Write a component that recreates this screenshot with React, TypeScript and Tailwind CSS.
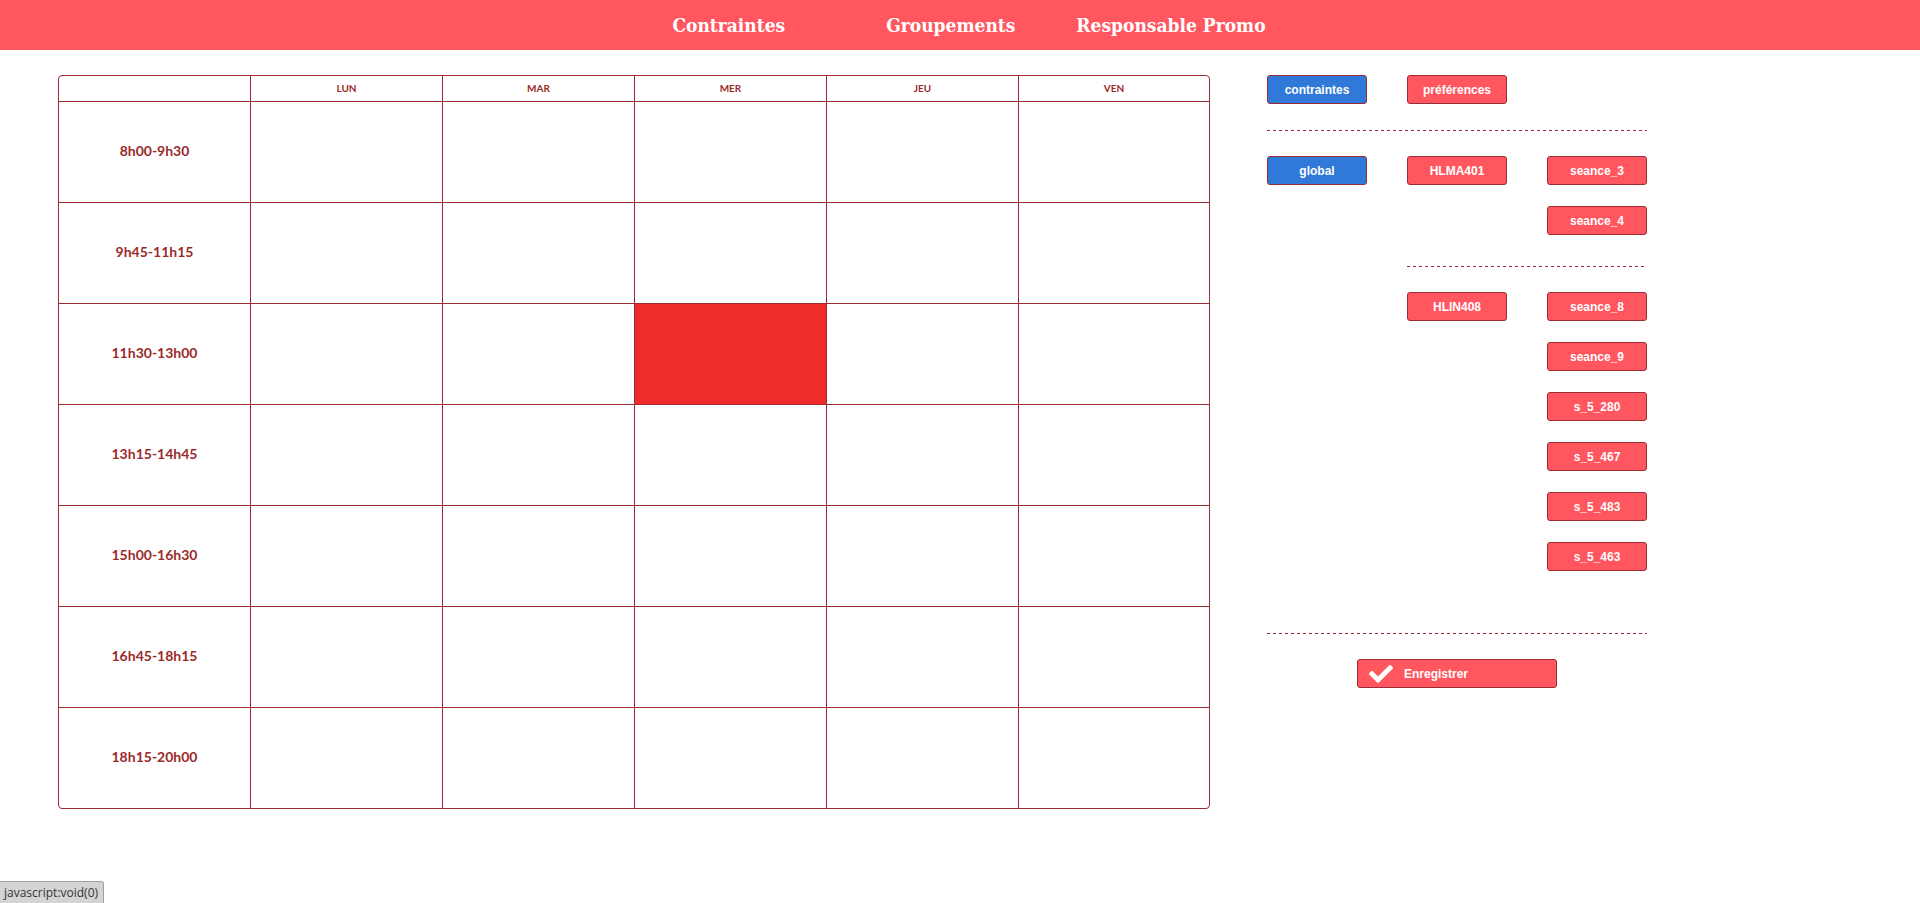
const days = ["LUN", "MAR", "MER", "JEU", "VEN"];
const slots = [
  "8h00-9h30",
  "9h45-11h15",
  "11h30-13h00",
  "13h15-14h45",
  "15h00-16h30",
  "16h45-18h15",
  "18h15-20h00",
];

// cells that are marked as blocked (slot index, day index)
const blocked = new Set(["2-2"]);

const Btn = ({ label, blue }: { label: string; blue?: boolean }) => (
  <button
    className={
      "w-[100px] h-[29px] rounded-[3px] border border-[#9b2c33] text-white text-[12px] font-bold leading-none " +
      (blue ? "bg-[#3079d8]" : "bg-[#ff5660]")
    }
    style={{ fontFamily: '"Liberation Sans", Arial, sans-serif' }}
  >
    {label}
  </button>
);

const Empty = () => <div className="w-[100px] h-[29px]" />;

const Dashed = ({ className = "" }: { className?: string }) => (
  <div
    className={
      "h-px bg-[repeating-linear-gradient(to_right,#9b2c33_0_3px,transparent_3px_6px)] " + className
    }
  />
);

export default function App() {
  return (
    <div className="min-h-screen bg-white">
      <nav
        className="h-[50px] bg-[#ff5660] flex items-center justify-center text-white font-bold text-[19px] pl-[18px]"
        style={{ fontFamily: '"DejaVu Serif", serif', fontStretch: "condensed" }}
      >
        <a href="#">Contraintes</a>
        <a href="#" className="ml-[101px]">Groupements</a>
        <a href="#" className="ml-[61px]">Responsable Promo</a>
      </nav>

      <div className="flex items-start pt-[25px] pl-[58px] gap-[57px]">
        {/* emploi du temps */}
        <div
          className="w-[1152px] border border-[#9b2c33] rounded-[4px] overflow-hidden text-[#9b2a2a]"
          style={{ fontFamily: "Lato, sans-serif" }}
        >
          <div className="grid grid-cols-[192px_192px_192px_192px_192px_1fr]">
            <div className="h-[26px] border-r border-b border-[#9b2c33]" />
            {days.map((d, i) => (
              <div
                key={d}
                className={
                  "h-[26px] border-b border-[#9b2c33] flex items-center justify-center text-[10px] font-bold " +
                  (i < 4 ? "border-r" : "")
                }
              >
                {d}
              </div>
            ))}
            {slots.map((s, r) => {
              const last = r === slots.length - 1;
              return [
                <div
                  key={s}
                  className={
                    "border-r border-[#9b2c33] flex items-center justify-center text-[14px] font-bold pb-[4px] " +
                    (last ? "h-[100px]" : "h-[101px] border-b")
                  }
                >
                  {s}
                </div>,
                ...days.map((d, c) => (
                  <div
                    key={s + d}
                    className={
                      "border-[#9b2c33] " +
                      (last ? "h-[100px] " : "h-[101px] border-b ") +
                      (c < 4 ? "border-r " : "") +
                      (blocked.has(r + "-" + c) ? "bg-[#ee2c2c]" : "")
                    }
                  />
                )),
              ];
            })}
          </div>
        </div>

        {/* panneau de droite */}
        <div className="w-[380px] flex flex-col">
          <div className="flex gap-[40px]">
            <Btn label="contraintes" blue />
            <Btn label="préférences" />
          </div>
          <Dashed className="mt-[26px]" />
          <div className="mt-[25px] flex flex-col gap-[21px]">
            <div className="flex gap-[40px]">
              <Btn label="global" blue />
              <Btn label="HLMA401" />
              <Btn label="seance_3" />
            </div>
            <div className="flex gap-[40px]">
              <Empty />
              <Empty />
              <Btn label="seance_4" />
            </div>
          </div>
          <Dashed className="mt-[31px] ml-[140px]" />
          <div className="mt-[25px] flex gap-[40px]">
            <Empty />
            <Btn label="HLIN408" />
            <div className="flex flex-col gap-[21px]">
              {["seance_8", "seance_9", "s_5_280", "s_5_467", "s_5_483", "s_5_463"].map((x) => (
                <Btn key={x} label={x} />
              ))}
            </div>
          </div>
          <Dashed className="mt-[62px]" />
          <div className="mt-[25px] flex justify-center">
            <button
              className="w-[200px] h-[29px] rounded-[3px] border border-[#9b2c33] bg-[#ff5660] text-white text-[12px] font-bold flex items-center pl-[11px] gap-[11px]"
              style={{ fontFamily: '"Liberation Sans", Arial, sans-serif' }}
            >
              <svg width="24" height="19" viewBox="0 0 512 400" fill="white">
                <path d="M173.9 391L7.5 224.6c-10-10-10-26.2 0-36.2l36.2-36.2c10-10 26.2-10 36.2 0L192 264.3 432.1 24.2c10-10 26.2-10 36.2 0l36.2 36.2c10 10 10 26.2 0 36.2L210.1 391c-10 10-26.2 10-36.2 0z" />
              </svg>
              Enregistrer
            </button>
          </div>
        </div>
      </div>

      <div
        className="fixed bottom-0 left-0 h-[22px] pl-[4px] pr-[5px] bg-[#d4d4d4] border-t border-r border-[#a0a0a0] rounded-tr-[3px] text-[12px] text-[#333] flex items-center"
        style={{ fontFamily: '"Open Sans", "Noto Sans", sans-serif' }}
      >
        javascript:void(0)
      </div>
    </div>
  );
}
